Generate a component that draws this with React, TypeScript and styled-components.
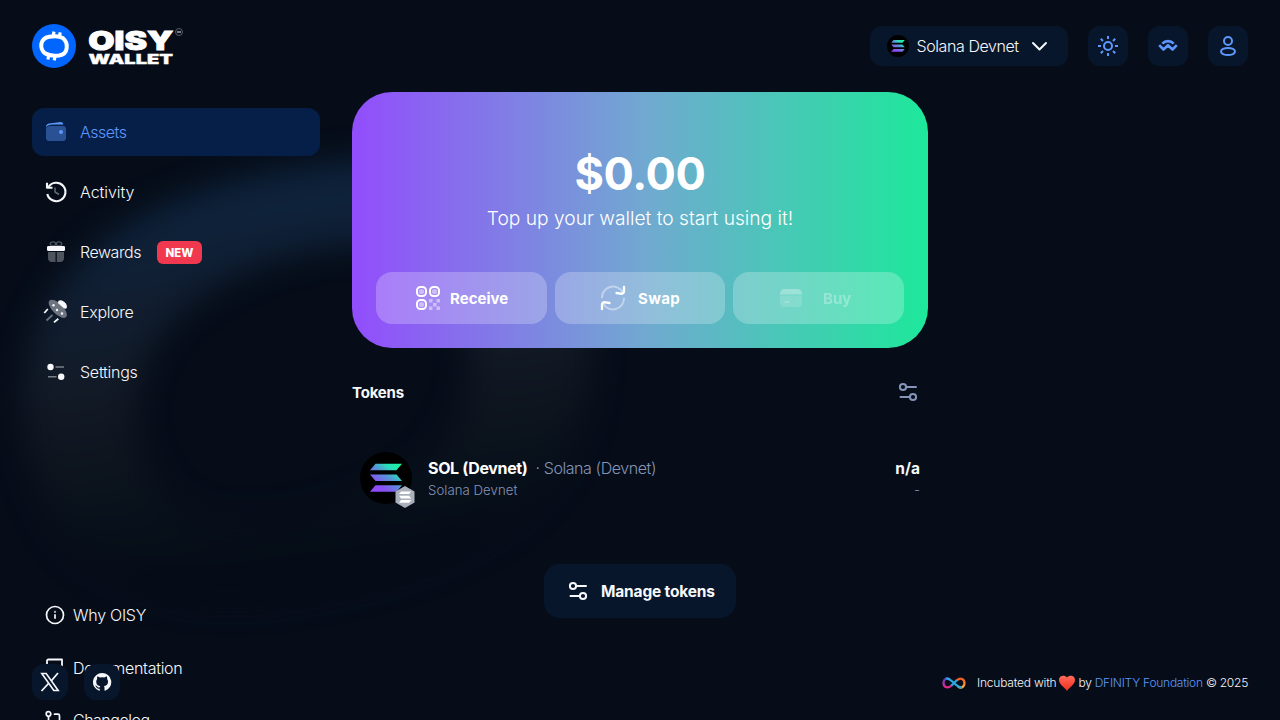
import React from 'react';
import styled, { createGlobalStyle } from 'styled-components';

const GlobalStyle = createGlobalStyle`
  * { box-sizing: border-box; }
  body { margin: 0; background: #060d19; overflow: hidden; }
  svg { display: block; flex: none; }
  button { font: inherit; color: inherit; border: 0; padding: 0; background: none; letter-spacing: inherit; }
`;

const Page = styled.div`
  position: relative;
  height: 720px;
  overflow: hidden;
  color: #f6f8fb;
  background: #060d19;
  font: 350 16px/24px Inter, "Liberation Sans", sans-serif;
`;

const Backdrop = styled.svg`
  position: absolute;
  left: 0;
  top: 0;
`;

const Label = styled.span<{ $ls?: number }>`
  letter-spacing: ${p => p.$ls ?? -0.2}px;
  white-space: nowrap;
`;

const Header = styled.header`
  position: relative;
  display: flex;
  justify-content: space-between;
  align-items: center;
  height: 92px;
  padding: 0 32px;
`;

const HeaderActions = styled.div`
  display: flex;
  gap: 20px;
`;

const NetworkButton = styled.button`
  display: flex;
  align-items: center;
  width: 198px;
  height: 40px;
  padding: 0 17px;
  border-radius: 12px;
  background: #08162c;
  ${Label} { width: 103px; margin: 0 9px 0 7.500px; text-align: left; }
`;

const IconButton = styled.button<{ $size: number }>`
  display: grid;
  place-items: center;
  width: ${p => p.$size}px;
  height: ${p => p.$size}px;
  border-radius: 12px;
  color: #5c97fb;
  background: #08162c;
`;

const Body = styled.div`
  position: relative;
  display: flex;
  gap: 32px;
  padding: 0 32px;
`;

const Sidebar = styled.nav`
  width: 288px;
  padding-top: 16px;
`;

const NavList = styled.div`
  display: flex;
  flex-direction: column;
  gap: 12px;
`;

const NavItem = styled.a<{ $active?: boolean }>`
  display: flex;
  align-items: center;
  gap: 12px;
  height: 48px;
  padding: 0 12px;
  border-radius: 12px;
  color: ${p => (p.$active ? '#5c97fb' : 'inherit')};
  background: ${p => (p.$active ? '#061f49' : 'transparent')};
`;

const Badge = styled.span`
  width: 45px;
  height: 23px;
  margin-left: 4px;
  border-radius: 6px;
  background: #f0384f;
  color: #fff;
  font-weight: 800;
  font-size: 11.5px;
  line-height: 24px;
  text-align: center;
`;

const HelpList = styled.div`
  margin-top: 193px;
`;

const HelpItem = styled.a`
  display: flex;
  align-items: center;
  gap: 8px;
  height: 52.5px;
  padding-left: 13px;
`;

const Main = styled.main`
  width: 576px;
`;

const Hero = styled.section`
  height: 256px;
  padding: 52px 24px 24px;
  border-radius: 40px;
  color: #fff;
  text-align: center;
  background: linear-gradient(90deg, #924dfc 0%, #71a9d1 51%, #1de89b 100%);
`;

const Balance = styled.div`
  font-weight: 700;
  font-size: 45px;
  line-height: 60px;
`;

const Hint = styled.div`
  font-size: 19.2px;
  line-height: 28px;
`;

const HeroActions = styled.div`
  display: grid;
  grid-template-columns: repeat(3, 1fr);
  gap: 8px;
  margin-top: 40px;
`;

const HeroButton = styled.button<{ $disabled?: boolean; $gap: number }>`
  display: flex;
  align-items: center;
  justify-content: center;
  gap: ${p => p.$gap}px;
  height: 52px;
  padding-right: ${p => (p.$disabled ? 7 : 0)}px;
  border-radius: 16px;
  font-weight: 700;
  font-size: 15px;
  background: rgba(255, 255, 255, 0.24);
  > * { opacity: ${p => (p.$disabled ? 0.3 : 1)}; }
  ${Label} { padding-top: 2px; }
`;

const SectionHead = styled.div`
  display: flex;
  align-items: center;
  justify-content: space-between;
  height: 24px;
  margin-top: 32px;
  padding-right: 8px;
  font-weight: 700;
  font-size: 15px;
  svg { color: #8595b8; }
  ${Label} { padding-top: 2px; }
`;

const TokenRow = styled.div`
  display: flex;
  align-items: center;
  height: 52px;
  margin-top: 48px;
  padding: 0 8px;
`;

const TokenLogo = styled.div`
  position: relative;
  width: 52px;
  height: 52px;
`;

const TokenBadge = styled.svg`
  position: absolute;
  right: -3px;
  bottom: -4px;
`;

const TokenText = styled.div`
  flex: 1;
  margin-left: 16px;
`;

const TokenTitle = styled.div`
  display: flex;
  height: 22px;
  line-height: 24px;
  color: #8595b8;
  b { color: #fff; margin-right: 8px; }
`;

const TokenNetwork = styled.div`
  font-size: 13.2px;
  line-height: 24px;
  height: 22px;
  color: #8595b8;
`;

const TokenAmount = styled.div`
  text-align: right;
  b { display: block; height: 22px; font-size: 15.5px; line-height: 26px; }
`;

const ManageButton = styled.button`
  display: flex;
  align-items: center;
  width: 192px;
  height: 54px;
  margin: 60px auto 0;
  padding-left: 22px;
  gap: 11px;
  border-radius: 16px;
  font-weight: 700;
  font-size: 15.5px;
  background: #08162c;
  ${Label} { padding-top: 2px; }
`;

const Footer = styled.footer`
  position: absolute;
  left: 32px;
  right: 32px;
  bottom: 20px;
  display: flex;
  justify-content: space-between;
  align-items: center;
`;

const Socials = styled.div`
  display: flex;
  gap: 16px;
  button { color: #f6f8fb; }
`;

const Credits = styled.div`
  display: flex;
  align-items: center;
  height: 36px;
  padding-top: 2px;
  font-size: 12px;
  line-height: 34px;
  a { color: #5c97fb; }
  svg + ${Label} { margin-left: 2px; }
  svg:first-child + ${Label} { margin: 0 2px 0 11px; }
`;

const stroke = (w: number) => ({ fill: 'none', stroke: 'currentColor', strokeWidth: w, strokeLinecap: 'round' as const, strokeLinejoin: 'round' as const });

const Logo = () => (
  <svg width="152" height="44" viewBox="0 0 152 44">
    <circle cx="22" cy="22" r="22" fill="#0066ff" />
    <g fill="none" stroke="#fff">
      <path strokeWidth="4" d="M17 12.800Q26.500 11.200 31 14.200Q35.500 18 34.700 24Q34 30.500 27 31.500Q18 32.500 13 29.300Q8.700 26 9.300 20Q10.500 14 17 12.800Z" />
      <path strokeWidth="3.200" d="M22 7.600l-1 5M28.300 8.400l-1.200 5M17 30.500l-1.100 5M23.200 31.200l-1 5.200" />
    </g>
    <g fill="#fff" stroke="#fff" fontFamily="Inter, sans-serif" fontWeight="900">
      <text x="56.300" y="26" fontSize="25.200" strokeWidth=".9" textLength="85" lengthAdjust="spacingAndGlyphs">OISY</text>
      <text x="56.500" y="39.500" fontSize="12.600" strokeWidth=".3" textLength="84.500" lengthAdjust="spacingAndGlyphs">WALLET</text>
    </g>
    <circle cx="147" cy="8" r="3.500" fill="none" stroke="#777d87" strokeWidth=".7" />
    <path d="M145 8h4" stroke="#a2a7af" strokeWidth="1.500" />
  </svg>
);

const SOL_BARS = ['M5.500 0H32L26.500 6.500H0Z', 'M0 10.700H26.500L32 17.200H5.500Z', 'M5.500 21.400H32L26.500 27.900H0Z'];

const SolanaIcon = ({ size }: { size: number }) => (
  <svg width={size} height={size} viewBox="0 0 52 52">
    <defs>
      <linearGradient id={`sol${size}`} gradientUnits="userSpaceOnUse" x1="4" y1="30" x2="29" y2="-2">
        <stop offset="0" stopColor="#9945ff" />
        <stop offset=".25" stopColor="#8752f3" />
        <stop offset=".55" stopColor="#5497d5" />
        <stop offset=".75" stopColor="#28e0b9" />
        <stop offset="1" stopColor="#19fb9b" />
      </linearGradient>
    </defs>
    <circle cx="26" cy="26" r="26" />
    <g transform="translate(10 11.800)" fill={`url(#sol${size})`}>{SOL_BARS.map(d => <path key={d} d={d} />)}</g>
  </svg>
);

const Sun = () => (
  <svg width="24" height="24" viewBox="0 0 24 24" {...stroke(2)} strokeLinecap="butt">
    <circle cx="12" cy="12" r="4" />
    <path d="M12 2v3M12 19v3M2 12h3M19 12h3M4.800 4.800l2.200 2.200M17 17l2.200 2.200M4.800 19.200l2.200-2.200M17 7l2.200-2.200" />
  </svg>
);

const WalletConnect = () => (
  <svg width="24" height="24" viewBox="0 0 24 24" {...stroke(2.6)} strokeLinecap="butt">
    <path d="M6.300 9.600C9.500 6.300 14.500 6.300 17.700 9.600M3.200 11.200L7.500 15.500L12 11.200L16.500 15.500L20.800 11.200" />
  </svg>
);

const User = () => (
  <svg width="24" height="24" viewBox="0 0 24 24" {...stroke(2)}>
    <circle cx="12" cy="7" r="4" />
    <ellipse cx="12" cy="17.500" rx="7" ry="3.600" />
  </svg>
);

const Chevron = () => <svg width="20" height="20" viewBox="0 0 20 20" {...stroke(2)}><path d="M4 7l6.500 6.500L17 7" /></svg>;

const Wallet = () => (
  <svg width="24" height="24" viewBox="0 0 24 24" fill="currentColor">
    <path d="M2 7q0-3 3-3.500L17 2q2 0 2.500 2.500H9Q4 4.500 2 7Z" />
    <path opacity=".42" d="M2 8q1-2 4-2h13q3 0 3 3v9q0 3-3 3H5q-3 0-3-3Z" />
    <circle cx="17" cy="12" r="2" />
  </svg>
);

const History = () => (
  <svg width="24" height="24" viewBox="0 0 24 24" {...stroke(2.1)} strokeLinecap="butt">
    <path d="M4.500 7A9.200 9.200 0 1 1 3.300 14" />
    <path d="M3 2.800v5h5.500" />
    <path opacity=".4" d="M11 7.500v4.500l4 2.500" strokeWidth="1.500" />
  </svg>
);

const Gift = () => (
  <svg width="24" height="24" viewBox="0 0 24 24" fill="currentColor">
    <g opacity=".3">
      <path d="M4 12h7.500v10H8q-4 0-4-4ZM12.800 12H20v6q0 4-4 4h-3.200Z" />
      <ellipse cx="9" cy="3.800" rx="2.700" ry="2" fill="none" stroke="currentColor" strokeWidth="1.300" />
      <ellipse cx="15" cy="3.800" rx="2.700" ry="2" fill="none" stroke="currentColor" strokeWidth="1.300" />
    </g>
    <rect x="3" y="6" width="18" height="5" rx="1.300" />
  </svg>
);

const Ufo = () => (
  <svg width="24" height="24" viewBox="0 0 24 24" overflow="visible">
    <ellipse cx="13.800" cy="8.800" rx="11.700" ry="5.300" transform="rotate(45 13.800 8.800)" fill="#6d7480" />
    <path d="M14 2.500Q14-.6 18 .5Q23.800 3 22.700 8Q21.800 9.500 19.500 7.900L15 4Q14 3.500 14 2.500Z" fill="currentColor" />
    <g fill="currentColor"><circle cx="9.500" cy="5.200" r="1.200" /><circle cx="13" cy="10" r="1.200" /><circle cx="18" cy="13.500" r="1.200" /></g>
    <g stroke="currentColor" strokeWidth="1.800"><path d="M.3 13L3.800 9M10 22.400l4.300-3.600" /><path opacity=".4" d="M2.500 20.500L8.500 15" /></g>
  </svg>
);

const Settings = () => (
  <svg width="24" height="24" viewBox="0 0 24 24" fill="currentColor">
    <circle cx="6.500" cy="7" r="3.200" /><circle cx="17.200" cy="16.800" r="3.200" />
    <path opacity=".45" d="M11.500 7H20M4 16.800h8.500" stroke="currentColor" strokeWidth="1.500" />
  </svg>
);

const Sliders = () => (
  <svg width="24" height="24" viewBox="0 0 24 24" {...stroke(2)}>
    <circle cx="7" cy="7" r="3.100" /><circle cx="17" cy="17" r="3.100" />
    <path d="M10.500 7H20M4.500 17H13.500" />
  </svg>
);

const Qr = () => (
  <svg width="26" height="26" viewBox="0 0 26 26" fill="currentColor">
    <g fill="none" stroke="currentColor" strokeWidth="2">
      <rect x="2" y="2" width="9" height="9" rx="3.500" /><rect x="15" y="2" width="9" height="9" rx="3.500" /><rect x="2" y="15" width="9" height="9" rx="3.500" />
    </g>
    <g opacity=".45">
      <circle cx="6.500" cy="6.500" r="2.600" /><circle cx="19.500" cy="6.500" r="2.600" /><circle cx="6.500" cy="19.500" r="2.600" />
      <path d="M14 14h3.500v3.500H14ZM21.500 14H25v3.500h-3.500ZM18 18h3.500v3.500H18ZM14 21.500h3.500V25H14ZM21.500 21.500H25V25h-3.500Z" />
    </g>
  </svg>
);

const SwapIcon = () => (
  <svg width="26" height="26" viewBox="0 0 26 26" {...stroke(2)}>
    <path opacity=".42" d="M2 12.500A11 11 0 0 1 22.500 7M24 13.500A11 11 0 0 1 3.500 19" />
    <path d="M24 1.800V6.500Q23.500 9 20.500 8.700L16.500 8M2 24.200V19.500Q2.500 17 5.500 17.300L9.500 18" strokeWidth="2.300" />
  </svg>
);

const Card = () => (
  <svg width="24" height="24" viewBox="0 0 24 24" fill="currentColor">
    <path d="M1 8.500Q1 3 6 3H18q5 0 5 5.500Z" />
    <path opacity=".45" d="M1 9.500h22V17q0 4-4 4H5q-4 0-4-4Z" />
    <path d="M5.500 16h5" stroke="currentColor" strokeWidth="1.800" />
  </svg>
);

const Info = () => (
  <svg width="20" height="20" viewBox="0 0 20 20" {...stroke(1.7)}>
    <circle cx="10" cy="10" r="8.500" /><path d="M10 9.200v4.500" strokeLinecap="butt" /><circle cx="10" cy="6.800" r=".3" />
  </svg>
);

const Book = () => (
  <svg width="20" height="20" viewBox="0 0 20 20" {...stroke(1.8)}>
    <path d="M2 15V3q0-1.500 1.500-1.500H17V15H4q-2 0-2 2t2 2h13" />
  </svg>
);

const Changelog = () => (
  <svg width="20" height="20" viewBox="0 0 20 20" {...stroke(1.7)}>
    <circle cx="3.500" cy="4" r="2.300" /><circle cx="15" cy="16" r="2.300" /><path d="M3.500 6.500V18M9.500 4.200H13q1.500 0 1.500 1.500V13" />
  </svg>
);

const XLogo = () => (
  <svg width="20" height="20" viewBox="0 0 20 20" fill="none" stroke="currentColor">
    <path strokeWidth="1.600" d="M1.800 1.500h4.400L18.200 18.500h-4.400Z" /><path strokeWidth="1.800" d="M18 1L11.200 9M8.500 11.500L1.500 19" />
  </svg>
);

const Github = () => (
  <svg width="20" height="20" viewBox="0 0 16 16" fill="currentColor">
    <path d="M8 .8a7.300 7.300 0 0 0-2.300 14.200c.4.1.5-.2.5-.4v-1.300c-2 .4-2.500-.9-2.500-.9-.3-.8-.8-1.100-.8-1.100-.7-.5.1-.5.1-.5.700.1 1.100.8 1.100.8.7 1.100 1.700.8 2.100.6.1-.5.300-.8.500-1-1.600-.2-3.300-.8-3.300-3.600 0-.8.300-1.500.8-2-.1-.2-.3-1 .1-2 0 0 .6-.2 2 .8a7 7 0 0 1 3.600 0c1.400-1 2-.8 2-.8.4 1 .2 1.800.1 2 .5.500.8 1.200.8 2 0 2.800-1.700 3.400-3.300 3.600.3.200.5.7.5 1.400v2c0 .2.100.5.500.4A7.300 7.300 0 0 0 8 .8Z" />
  </svg>
);

const Infinity = () => (
  <svg width="24" height="14" viewBox="0 0 24 14" fill="none" strokeWidth="2.300">
    <defs>
      <linearGradient id="infL" x1="0" y1="0" x2="0" y2="1"><stop offset="0" stopColor="#5b3fc0" /><stop offset="1" stopColor="#e9288c" /></linearGradient>
      <linearGradient id="infR" x1="0" y1="0" x2="0" y2="1"><stop offset="0" stopColor="#f15a24" /><stop offset="1" stopColor="#fbb03b" /></linearGradient>
    </defs>
    <path stroke="url(#infL)" d="M9.500 9.500C5 13.500 1.500 10.500 1.500 7S4.500 1 8 3.500" />
    <path stroke="url(#infR)" d="M14.500 4.500C19 .5 22.500 3.500 22.500 7S19.500 13 16 10.500" />
    <path stroke="#29abe2" d="M4 2.800C9 .5 15 13.500 20 11.300M9.300 9.700L14.700 4.300" />
  </svg>
);

const Heart = () => (
  <svg width="18" height="17" viewBox="0 0 18 17">
    <defs><linearGradient id="heart" x1="0" y1="0" x2="0" y2="1"><stop offset="0" stopColor="#ff6d5c" /><stop offset=".5" stopColor="#fb4939" /><stop offset="1" stopColor="#e63524" /></linearGradient></defs>
    <path fill="url(#heart)" d="M9 2.600C7-.3 1 0 1 5C1 9.500 6.500 12 9 16C11.500 12 17 9.500 17 5C17 0 11-.3 9 2.600Z" />
  </svg>
);

const Glow = () => (
  <Backdrop width="1280" height="720" viewBox="0 0 1280 720">
    <defs>
      <filter id="soft" x="-20%" y="-20%" width="140%" height="140%" colorInterpolationFilters="sRGB"><feGaussianBlur stdDeviation="15" /></filter>
      <linearGradient id="ring" gradientUnits="userSpaceOnUse" x1="0" y1="150" x2="60" y2="610">
        <stop offset="0" stopColor="#0c233d" /><stop offset=".2" stopColor="#0e223a" /><stop offset=".36" stopColor="#111e31" />
        <stop offset=".54" stopColor="#121a26" /><stop offset=".68" stopColor="#0e151f" /><stop offset=".82" stopColor="#08111b" /><stop offset=".95" stopColor="#050c17" />
      </linearGradient>
    </defs>
    <path filter="url(#soft)" fill="url(#ring)" fillRule="evenodd" d="M360 160C230 170 115 210 60 285C12 350 15 440 45 505C80 585 180 615 300 595C430 575 530 530 570 450C605 380 600 280 540 210C500 165 430 156 360 160ZM360 245C270 250 185 288 152 348C128 400 132 460 172 500C210 535 310 525 380 490C430 470 465 430 467 370C475 300 440 245 360 245Z" />
  </Backdrop>
);

const NAV = [
  { name: 'Assets', icon: <Wallet />, ls: -0.5 },
  { name: 'Activity', icon: <History />, ls: -0.05 },
  { name: 'Rewards', icon: <Gift />, ls: -0.45, badge: 'NEW' },
  { name: 'Explore', icon: <Ufo />, ls: -0.3 },
  { name: 'Settings', icon: <Settings />, ls: -0.25 },
];

const HELP = [
  { name: 'Why OISY', icon: <Info />, ls: -0.25 },
  { name: 'Documentation', icon: <Book />, ls: -0.28 },
  { name: 'Changelog', icon: <Changelog />, ls: -0.5 },
];

export default function App() {
  return (
    <Page>
      <GlobalStyle />
      <Glow />
      <Header>
        <Logo />
        <HeaderActions>
          <NetworkButton><SolanaIcon size={22} /><Label $ls={-0.42}>Solana Devnet</Label><Chevron /></NetworkButton>
          <IconButton $size={40}><Sun /></IconButton>
          <IconButton $size={40}><WalletConnect /></IconButton>
          <IconButton $size={40}><User /></IconButton>
        </HeaderActions>
      </Header>
      <Body>
        <Sidebar>
          <NavList>
            {NAV.map((n, i) => (
              <NavItem key={n.name} $active={i === 0}>
                {n.icon}<Label $ls={n.ls}>{n.name}</Label>{n.badge && <Badge>{n.badge}</Badge>}
              </NavItem>
            ))}
          </NavList>
          <HelpList>
            {HELP.map(h => <HelpItem key={h.name}>{h.icon}<Label $ls={h.ls}>{h.name}</Label></HelpItem>)}
          </HelpList>
        </Sidebar>
        <Main>
          <Hero>
            <Balance><Label $ls={-0.4}>$0.00</Label></Balance>
            <Hint><Label $ls={0}>Top up your wallet to start using it!</Label></Hint>
            <HeroActions>
              <HeroButton $gap={9.5}><Qr /><Label $ls={0}>Receive</Label></HeroButton>
              <HeroButton $gap={12}><SwapIcon /><Label $ls={0.3}>Swap</Label></HeroButton>
              <HeroButton $gap={20} $disabled><Card /><Label $ls={0}>Buy</Label></HeroButton>
            </HeroActions>
          </Hero>
          <SectionHead><Label $ls={-0.2}>Tokens</Label><Sliders /></SectionHead>
          <TokenRow>
            <TokenLogo>
              <SolanaIcon size={52} />
              <TokenBadge width="20" height="22" viewBox="0 0 20 22">
                <path fill="#a9b0bb" d="M10 0L19.500 5.500V16.500L10 22L.5 16.500V5.500Z" />
                <g transform="translate(4 5.500) scale(.38 .4)" fill="#fff">{SOL_BARS.map(d => <path key={d} d={d} />)}</g>
              </TokenBadge>
            </TokenLogo>
            <TokenText>
              <TokenTitle><b><Label $ls={-0.35}>SOL (Devnet)</Label></b><Label $ls={-0.43}>· Solana (Devnet)</Label></TokenTitle>
              <TokenNetwork><Label $ls={0.05}>Solana Devnet</Label></TokenNetwork>
            </TokenText>
            <TokenAmount><b>n/a</b><TokenNetwork>-</TokenNetwork></TokenAmount>
          </TokenRow>
          <ManageButton><Sliders /><Label $ls={-0.17}>Manage tokens</Label></ManageButton>
        </Main>
      </Body>
      <Footer>
        <Socials>
          <IconButton $size={36}><XLogo /></IconButton>
          <IconButton $size={36}><Github /></IconButton>
        </Socials>
        <Credits>
          <Infinity />
          <Label $ls={-0.2}>Incubated with</Label>
          <Heart />
          <Label $ls={-0.25}>by <a>DFINITY Foundation</a> © 2025</Label>
        </Credits>
      </Footer>
    </Page>
  );
}
